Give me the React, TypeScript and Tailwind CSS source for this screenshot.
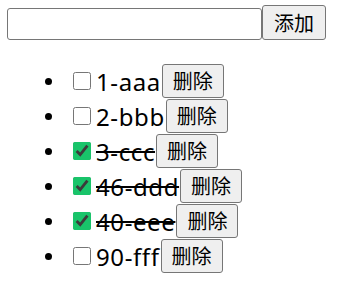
import React from "react";

const items = [
  { id: 1, text: "1-aaa", done: false },
  { id: 2, text: "2-bbb", done: false },
  { id: 3, text: "3-ccc", done: true },
  { id: 4, text: "46-ddd", done: true },
  { id: 5, text: "40-eee", done: true },
  { id: 6, text: "90-fff", done: false },
];

export default function App() {
  return (
    <div
      className="w-[345px] h-[284px] bg-white text-black overflow-hidden"
      style={{ fontFamily: '"Noto Sans", "Noto Sans CJK SC", sans-serif' }}
    >
      <div className="flex items-end pl-[7px] pt-[5px]">
        <input
          type="text"
          className="w-[255px] h-[32px] border border-[#767676] rounded-[3px] bg-white px-[2px] text-[20px] outline-none"
        />
        <button
          className="w-[64px] h-[35px] border border-[#767676] rounded-[3px] bg-[#efefef] text-[20px] leading-none flex items-center justify-center"
          style={{ fontFamily: '"Noto Sans CJK SC", sans-serif' }}
        >
          添加
        </button>
      </div>
      <ul className="mt-[24px]">
        {items.map((it) => (
          <li key={it.id} className="flex items-start h-[35px]">
            <span className="ml-[45px] mt-[14px] w-[7px] h-[7px] rounded-full bg-black shrink-0" />
            <input
              type="checkbox"
              defaultChecked={it.done}
              className="ml-[21px] mt-[8px] w-[18px] h-[18px] m-0 shrink-0 accent-[#19c46a]"
            />
            <span
              className={
                "ml-[5px] text-[24px] leading-[36px] tracking-[0.6px] whitespace-nowrap " +
                (it.done ? "line-through" : "")
              }
            >
              {it.text}
            </span>
            <button
              className="ml-[1px] w-[62px] h-[34px] border border-[#767676] rounded-[3px] bg-[#efefef] text-[20px] leading-none flex items-center justify-center shrink-0"
              style={{ fontFamily: '"Noto Sans CJK SC", sans-serif' }}
            >
              删除
            </button>
          </li>
        ))}
      </ul>
    </div>
  );
}
